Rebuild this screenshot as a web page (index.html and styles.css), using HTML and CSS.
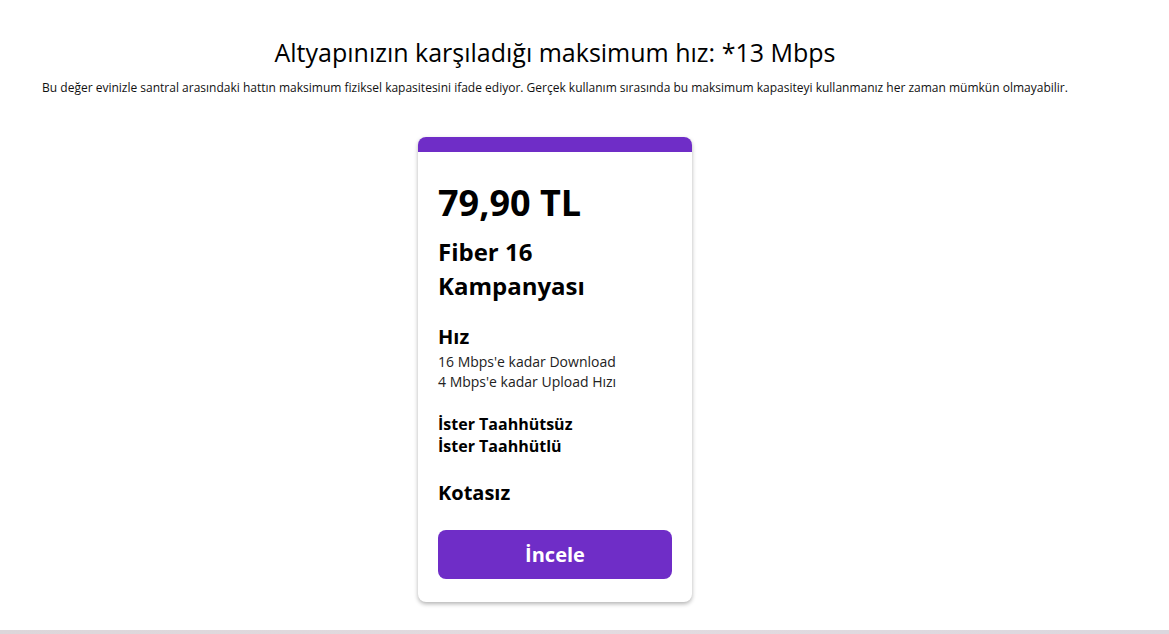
FILE: index.html
```html
<!DOCTYPE html>
<html lang="tr">
<head>
<meta charset="utf-8">
<link rel="stylesheet" href="styles.css">
</head>
<body>
<div class="page">
  <h1 class="title">Altyapınızın karşıladığı maksimum hız: *13 Mbps</h1>
  <p class="subtitle">Bu değer evinizle santral arasındaki hattın maksimum fiziksel kapasitesini ifade ediyor. Gerçek kullanım sırasında bu maksimum kapasiteyi kullanmanız her zaman mümkün olmayabilir.</p>
  <div class="cards">
    <div class="card">
      <div class="card-top"></div>
      <div class="card-body">
        <div class="price">79,90 TL</div>
        <div class="name">Fiber 16<br>Kampanyası</div>
        <div class="section-title">Hız</div>
        <div class="desc">16 Mbps'e kadar Download<br>4 Mbps'e kadar Upload Hızı</div>
        <div class="commit">İster Taahhütsüz<br>İster Taahhütlü</div>
        <div class="section-title quota">Kotasız</div>
        <button class="btn">İncele</button>
      </div>
    </div>
  </div>
</div>
<div class="footer-strip"></div>
</body>
</html>
```
FILE: styles.css
```css
html, body {
  margin: 0;
  padding: 0;
  background: #fff;
}
body {
  font-family: "Open Sans", "Noto Sans", sans-serif;
  color: #000;
  height: 634px;
  display: flex;
  flex-direction: column;
}
.page {
  width: 1110px;
  flex: 1;
  padding-top: 35px;
  box-sizing: border-box;
}
.title {
  margin: 0;
  text-align: center;
  font-size: 25px;
  font-weight: 500;
  line-height: 34px;
}
.subtitle {
  margin: 11px 0 0;
  text-align: center;
  font-size: 12px;
  line-height: 16px;
  color: #111;
}
.cards {
  display: flex;
  justify-content: center;
  margin-top: 41px;
}
.card {
  width: 274px;
  border-radius: 8px;
  background: #fff;
  box-shadow: 0 2px 4px rgba(0, 0, 0, 0.3);
  overflow: hidden;
}
.card-top {
  height: 15px;
  background: #6f2dc7;
}
.card-body {
  padding: 23px 20px 23px;
  display: flex;
  flex-direction: column;
}
.price {
  font-size: 36px;
  font-weight: 700;
  line-height: 56px;
}
.name {
  margin-top: 4px;
  font-size: 24px;
  font-weight: 700;
  line-height: 34px;
}
.section-title {
  margin-top: 21px;
  font-size: 20px;
  font-weight: 700;
  line-height: 26px;
}
.desc {
  margin-top: 2px;
  font-size: 14px;
  line-height: 20px;
  color: #222;
}
.commit {
  margin-top: 21px;
  font-size: 16px;
  font-weight: 700;
  line-height: 22px;
}
.quota {
  margin-top: 23px;
}
.btn {
  margin-top: 24px;
  height: 49px;
  border: none;
  border-radius: 8px;
  background: #6f2dc7;
  color: #fff;
  font-family: inherit;
  font-size: 20px;
  font-weight: 700;
  cursor: pointer;
}
.footer-strip {
  height: 4px;
  background: linear-gradient(90deg, #ddd6da, #e3dbe0 50%, #dcd7de);
}
```
